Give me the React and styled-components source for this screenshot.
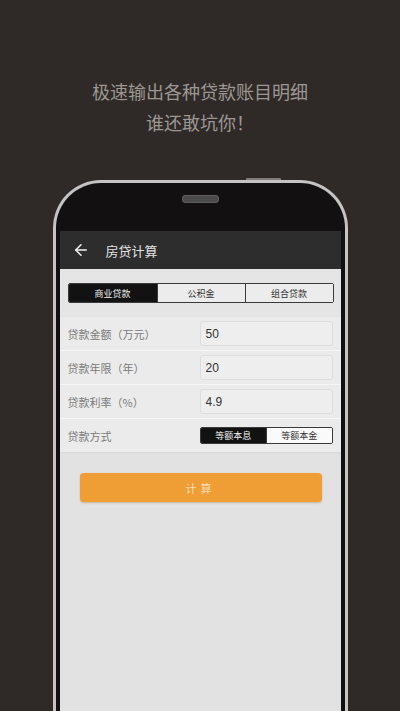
import React from "react";
import styled, { createGlobalStyle } from "styled-components";
import { ArrowLeft } from "lucide-react";

const GlobalStyle = createGlobalStyle`
  body {
    margin: 0;
    background: #2f2a28;
    font-family: "Noto Sans CJK SC", "Noto Sans", sans-serif;
  }
`;

const Page = styled.div`
  height: 711px;
  overflow: hidden;
  display: flex;
  flex-direction: column;
  align-items: center;
  background: #2f2a28;
`;

const Slogan = styled.div`
  padding-top: 76px;
  text-align: center;
  font-size: 18px;
  line-height: 31px;
  color: #9d9793;
`;

const Phone = styled.div`
  position: relative;
  margin-top: 42px;
  width: 295px;
  box-sizing: border-box;
  flex: 1;
  display: flex;
  flex-direction: column;
  padding: 0 4px;
  background: #121010;
  border: 3px solid #c4c4c4;
  border-bottom: none;
  border-radius: 48px 48px 0 0;
  /* power key on top edge */
  &::before {
    content: "";
    position: absolute;
    top: -5px;
    right: 64px;
    width: 35px;
    height: 2px;
    background: #7f7c7a;
    border-radius: 1px 1px 0 0;
  }
`;

const Earpiece = styled.div`
  height: 48px;
  display: flex;
  justify-content: center;
  padding-top: 12px;
  box-sizing: border-box;
  span {
    width: 37px;
    height: 8px;
    border-radius: 4px;
    background: #4b4b4b;
    box-shadow: inset 0 0 0 1px #5d5d5d;
  }
`;

const Screen = styled.div`
  flex: 1;
  background: #e2e2e2;
  display: flex;
  flex-direction: column;
`;

const Toolbar = styled.div`
  height: 38px;
  background: #2d2d2d;
  display: flex;
  align-items: center;
  padding-left: 12px;
  color: #e2e2e2;
  font-size: 13px;
  gap: 16px;
`;

const TopArea = styled.div`
  background: #e5e5e5;
  padding: 14px 7px 14px 8px;
`;

const Tabs = styled.div`
  display: grid;
  grid-template-columns: repeat(3, 1fr);
  height: 20px;
  border: 1px solid #3a3a3a;
  border-radius: 2px;
  box-sizing: border-box;
  overflow: hidden;
`;

const Tab = styled.div`
  display: flex;
  align-items: center;
  justify-content: center;
  font-size: 9px;
  background: ${(p) => (p.$active ? "#121212" : "#ececec")};
  color: ${(p) => (p.$active ? "#f0f0f0" : "#333")};
  & + & {
    border-left: 1px solid #3a3a3a;
  }
`;

const Panel = styled.div`
  background: #ebebeb;
  box-shadow: 0 1px 2px rgba(0, 0, 0, 0.06);
`;

const Row = styled.div`
  height: 33px;
  display: flex;
  align-items: center;
  padding: 0 8px;
  & + & {
    border-top: 1px solid #f6f6f6;
  }
`;

const Label = styled.div`
  width: 132px;
  font-size: 11px;
  color: #7a7a7a;
`;

const Field = styled.div`
  flex: 1;
  height: 25px;
  box-sizing: border-box;
  display: flex;
  align-items: center;
  padding-left: 5px;
  background: #eeeeee;
  border: 1px solid #dddddd;
  border-radius: 3px;
  font-family: "Liberation Sans", Arial, sans-serif;
  font-size: 12px;
  color: #333;
`;

const Toggle = styled.div`
  flex: 1;
  height: 17px;
  display: grid;
  grid-template-columns: 1fr 1fr;
  border: 1px solid #3a3a3a;
  border-radius: 2px;
  box-sizing: border-box;
  overflow: hidden;
`;

const ToggleItem = styled(Tab)`
  background: ${(p) => (p.$active ? "#121212" : "#fafafa")};
`;

const Action = styled.div`
  padding: 21px 19px 0 20px;
`;

const CalcButton = styled.div`
  height: 29px;
  display: flex;
  align-items: center;
  justify-content: center;
  background: #ee9e34;
  border-radius: 4px;
  box-shadow: 0 1px 2px rgba(150, 90, 20, 0.35);
  color: #f9dcb2;
  font-size: 11px;
  letter-spacing: 4px;
`;

const fields = [
  ["贷款金额（万元）", "50"],
  ["贷款年限（年）", "20"],
  ["贷款利率（%）", "4.9"],
];

export default function App() {
  return (
    <>
      <GlobalStyle />
      <Page>
        <Slogan>
          极速输出各种贷款账目明细
          <br />
          谁还敢坑你！
        </Slogan>
        <Phone>
          <Earpiece>
            <span />
          </Earpiece>
          <Screen>
            <Toolbar>
              <ArrowLeft size={18} strokeWidth={2} color="#f2f2f2" />
              <span>房贷计算</span>
            </Toolbar>
            <TopArea>
              <Tabs>
                <Tab $active>商业贷款</Tab>
                <Tab>公积金</Tab>
                <Tab>组合贷款</Tab>
              </Tabs>
            </TopArea>
            <Panel>
              {fields.map(([label, value]) => (
                <Row key={label}>
                  <Label>{label}</Label>
                  <Field>{value}</Field>
                </Row>
              ))}
              <Row>
                <Label>贷款方式</Label>
                <Toggle>
                  <ToggleItem $active>等额本息</ToggleItem>
                  <ToggleItem>等额本金</ToggleItem>
                </Toggle>
              </Row>
            </Panel>
            <Action>
              <CalcButton>计算</CalcButton>
            </Action>
          </Screen>
        </Phone>
      </Page>
    </>
  );
}
